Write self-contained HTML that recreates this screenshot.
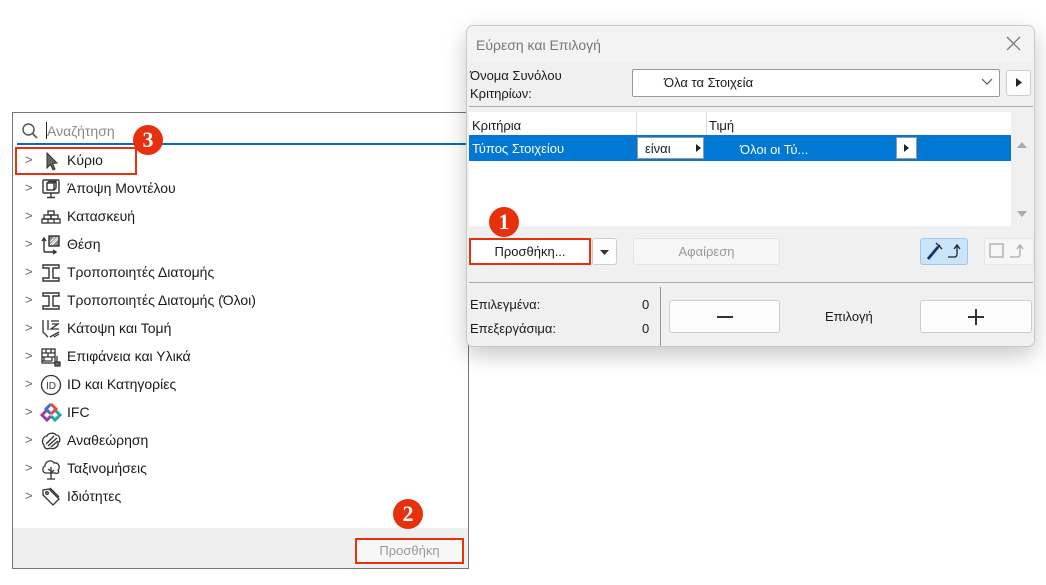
<!DOCTYPE html>
<html><head><meta charset="utf-8"><style>
*{box-sizing:border-box;margin:0;padding:0}
body{width:1046px;height:585px;background:#fff;position:relative;overflow:hidden;font-family:"Liberation Sans","DejaVu Sans",sans-serif;color:#1a1a1a}
.a{position:absolute}
.t{position:absolute;white-space:nowrap;font-size:13px}
.li{position:absolute;left:0;height:28px;width:440px;font-size:14px}
.li .ch{position:absolute;left:9px;top:5px;color:#666;font-size:13px}
.li .ic{position:absolute;left:24px;top:3px;width:22px;height:22px}
.li .tx{position:absolute;left:51px;top:5px}
.badge{position:absolute;width:30px;height:30px;border-radius:50%;background:#e8300c;color:#fff;font-family:"Liberation Serif",serif;font-weight:bold;font-size:22px;text-align:center;line-height:30px}
.btn{position:absolute;background:#fdfdfd;border:1px solid #ccc;border-radius:3px;font-size:13px;text-align:center}
</style></head><body>

<!-- left panel -->
<div class="a" style="left:12px;top:112px;width:457px;height:457px;border:1px solid #777;background:#fff">
  <svg class="a" style="left:8px;top:9px" width="18" height="18" viewBox="0 0 18 18"><circle cx="7.5" cy="7.5" r="5.5" fill="none" stroke="#555" stroke-width="1.5"/><path d="M11.5 11.5L16 16" stroke="#555" stroke-width="1.6"/></svg>
  <div class="a" style="left:33px;top:9px;width:1px;height:17px;background:#222"></div>
  <div class="t" style="left:34px;top:10px;font-size:14px;color:#888">Αναζήτηση</div>
  <div class="a" style="left:4px;top:30px;width:452px;height:2px;background:#0a66c2"></div>
  <div class="a" style="left:2px;top:34px;width:122px;height:28px;border:2px solid #e8300c"></div>
  <div style="position:absolute;left:3px;top:34px">
    <div class="li" style="top:0"><span class="ch">&gt;</span><svg class="ic" viewBox="0 0 22 22"><path d="M7 3L7 18L10.5 14.5L13 20L15 19L12.5 13.5L17 13Z" fill="#666" stroke="#333" stroke-width="1"/></svg><span class="tx">Κύριο</span></div>
    <div class="li" style="top:28px"><span class="ch">&gt;</span><svg class="ic" viewBox="0 0 22 22" fill="none" stroke="#333" stroke-width="1.4"><rect x="3" y="2" width="16" height="13" rx="1"/><rect x="7" y="5" width="7" height="7"/><path d="M7 5L9 3.5H16V10L14 12M14 5L16 3.5M11 15V19M7 19.5H15"/></svg><span class="tx">Άποψη Μοντέλου</span></div>
    <div class="li" style="top:56px"><span class="ch">&gt;</span><svg class="ic" viewBox="0 0 22 22" fill="none" stroke="#333" stroke-width="1.3"><rect x="8" y="5" width="6" height="4"/><rect x="4" y="9" width="7" height="4"/><rect x="11" y="9" width="7" height="4"/><rect x="2" y="13" width="18" height="4"/><path d="M8 13V17M14 13V17"/></svg><span class="tx">Κατασκευή</span></div>
    <div class="li" style="top:84px"><span class="ch">&gt;</span><svg class="ic" viewBox="0 0 22 22" fill="none" stroke="#333" stroke-width="1.4"><path d="M4 18V5M2 7L4 4L6 7M4 18H15M13 16L16 18L13 20"/><rect x="9" y="2" width="10" height="10" fill="#888"/><path d="M10 11L18 3M12 11L18 5M10 8L15 3" stroke="#fff" stroke-width="1"/></svg><span class="tx">Θέση</span></div>
    <div class="li" style="top:112px"><span class="ch">&gt;</span><svg class="ic" viewBox="0 0 22 22" fill="none" stroke="#333" stroke-width="1.4"><path d="M3 3H19V6H13V16H19V19H3V16H9V6H3Z"/></svg><span class="tx">Τροποποιητές Διατομής</span></div>
    <div class="li" style="top:140px"><span class="ch">&gt;</span><svg class="ic" viewBox="0 0 22 22" fill="none" stroke="#333" stroke-width="1.4"><path d="M3 3H19V6H13V16H19V19H3V16H9V6H3Z"/></svg><span class="tx">Τροποποιητές Διατομής (Όλοι)</span></div>
    <div class="li" style="top:168px"><span class="ch">&gt;</span><svg class="ic" viewBox="0 0 22 22" fill="none" stroke="#333" stroke-width="1.3"><path d="M3 2V14L8 19M8 2V12M11 3H19M12 6L18 6L11 11H19M10 19L19 14M14 19L19 16"/></svg><span class="tx">Κάτοψη και Τομή</span></div>
    <div class="li" style="top:196px"><span class="ch">&gt;</span><svg class="ic" viewBox="0 0 22 22" fill="none" stroke="#333" stroke-width="1.3"><rect x="2" y="3" width="13" height="14"/><path d="M2 7H15M2 11H15M2 15H12M6 3V7M11 3V7M8 7V11M4 11V15M12 11V15"/><path d="M17 10V16M15 16H20V20H15Z" fill="#666"/></svg><span class="tx">Επιφάνεια και Υλικά</span></div>
    <div class="li" style="top:224px"><span class="ch">&gt;</span><svg class="ic" viewBox="0 0 22 22"><circle cx="11" cy="11" r="9.5" fill="none" stroke="#333" stroke-width="1.3"/><text x="11" y="15" font-size="10" text-anchor="middle" fill="#333" font-family="Liberation Sans">ID</text></svg><span class="tx">ID και Κατηγορίες</span></div>
    <div class="li" style="top:252px"><span class="ch">&gt;</span><svg class="ic" viewBox="0 0 22 22" fill="none" stroke-width="3"><path d="M11 2L6 7L11 12" stroke="#3d6fd1"/><path d="M11 2L16 7L11 12" stroke="#e44a4a"/><path d="M6 9L2 13L7 18L11 14" stroke="#a03aa8"/><path d="M16 9L20 13L15 18L11 14" stroke="#20a89a"/></svg><span class="tx">IFC</span></div>
    <div class="li" style="top:280px"><span class="ch">&gt;</span><svg class="ic" viewBox="0 0 22 22" fill="none" stroke="#333" stroke-width="1.3"><path d="M4 15C1 12 3 6 7 6C8 3 14 2 16 5C20 5 21 11 18 13C19 17 13 20 10 18C7 20 4 18 4 15Z"/><path d="M6 14L14 6M8 16L17 8M11 17L18 11"/></svg><span class="tx">Αναθεώρηση</span></div>
    <div class="li" style="top:308px"><span class="ch">&gt;</span><svg class="ic" viewBox="0 0 22 22" fill="none" stroke="#333" stroke-width="1.3"><path d="M6 15C2 15 2 9 5 8C5 3 12 1 14 5C18 4 21 9 18 12C20 15 17 16 15 15Z"/><path d="M11 9V21M11 13L8 11M11 15L14 12M7 21H15"/></svg><span class="tx">Ταξινομήσεις</span></div>
    <div class="li" style="top:336px"><span class="ch">&gt;</span><svg class="ic" viewBox="0 0 22 22" fill="none" stroke="#333" stroke-width="1.3"><path d="M3 4L9 3L19 13L13 19L3 9Z"/><circle cx="7" cy="7" r="1.3"/><path d="M10 2L19 11"/></svg><span class="tx">Ιδιότητες</span></div>
  </div>
  <div class="a" style="left:0;top:415px;width:455px;height:40px;background:#efefef"></div>
  <div class="a" style="left:342px;top:425px;width:109px;height:26px;border:2px solid #e8300c;background:#f7f7f7;color:#999;font-size:13px;text-align:center;line-height:22px">Προσθήκη</div>
</div>
<div class="badge" style="left:133px;top:125px">3</div>
<div class="badge" style="left:393px;top:499px">2</div>

<!-- dialog -->
<div class="a" style="left:466px;top:25px;width:569px;height:322px;border:1px solid #c8c8c8;border-radius:7px;background:#f0f0f0;box-shadow:0 8px 22px rgba(0,0,0,0.22);overflow:hidden">
  <div class="a" style="left:0;top:0;width:569px;height:36px;background:#f3f3f3"></div>
  <div class="t" style="left:9px;top:11px;font-size:14px;color:#777">Εύρεση και Επιλογή</div>
  <svg class="a" style="left:539px;top:10px" width="15" height="15"><path d="M1 1L14 14M14 1L1 14" stroke="#777" stroke-width="1.3"/></svg>
  <div class="t" style="left:3px;top:42px">Όνομα Συνόλου</div>
  <div class="t" style="left:3px;top:60px">Κριτηρίων:</div>
  <div class="a" style="left:165px;top:43px;width:368px;height:28px;background:#fff;border:1px solid #999;border-radius:2px"></div>
  <div class="t" style="left:197px;top:49px">Όλα τα Στοιχεία</div>
  <svg class="a" style="left:514px;top:52px" width="12" height="8"><path d="M1 1L6 6L11 1" fill="none" stroke="#555" stroke-width="1.2"/></svg>
  <div class="btn" style="left:539px;top:44px;width:25px;height:26px"></div>
  <svg class="a" style="left:548px;top:51px" width="8" height="11"><path d="M1 1L7 5.5L1 10Z" fill="#222"/></svg>
  <div class="a" style="left:2px;top:80px;width:564px;height:1px;background:#aaa"></div>
  <!-- table -->
  <div class="a" style="left:2px;top:86px;width:542px;height:114px;background:#fff"></div>
  <div class="a" style="left:169px;top:86px;width:1px;height:23px;background:#ddd"></div>
  <div class="a" style="left:239px;top:86px;width:1px;height:23px;background:#ddd"></div>
  <div class="t" style="left:5px;top:92px">Κριτήρια</div>
  <div class="t" style="left:242px;top:92px">Τιμή</div>
  <div class="a" style="left:2px;top:109px;width:542px;height:26px;background:#0078d4"></div>
  <div class="t" style="left:5px;top:115px;color:#fff">Τύπος Στοιχείου</div>
  <div class="a" style="left:170px;top:111px;width:67px;height:22px;background:#fff;border:1px solid #999"></div>
  <div class="t" style="left:178px;top:115px">είναι</div>
  <svg class="a" style="left:228px;top:117px" width="7" height="10"><path d="M1 1L6 5L1 9Z" fill="#222"/></svg>
  <div class="t" style="left:273px;top:116px;color:#fff">Όλοι οι Τύ...</div>
  <div class="a" style="left:429px;top:111px;width:21px;height:22px;background:#fff;border:1px solid #999"></div>
  <svg class="a" style="left:436px;top:117px" width="7" height="10"><path d="M1 1L6 5L1 9Z" fill="#222"/></svg>
  <svg class="a" style="left:549px;top:114px" width="12" height="10"><path d="M1 8L6 2L11 8Z" fill="#aaa"/></svg>
  <svg class="a" style="left:549px;top:183px" width="12" height="10"><path d="M1 2L6 8L11 2Z" fill="#aaa"/></svg>
  <!-- buttons -->
  <div class="btn" style="left:2px;top:212px;width:122px;height:27px;background:#fff;border:2px solid #e8300c;border-radius:0;line-height:23px">Προσθήκη...</div>
  <div class="btn" style="left:125px;top:212px;width:25px;height:27px"></div>
  <svg class="a" style="left:132px;top:223px" width="11" height="7"><path d="M1 1L10 1L5.5 6Z" fill="#333"/></svg>
  <div class="btn" style="left:166px;top:212px;width:147px;height:27px;color:#999;line-height:25px;border-color:#e3e3e3;background:#f6f6f6">Αφαίρεση</div>
  <div class="a" style="left:453px;top:212px;width:48px;height:27px;background:#cce4f7;border:1px solid #99c9ef;border-radius:3px"></div>
  <svg class="a" style="left:457px;top:214px" width="42" height="22" fill="none"><path d="M4 19L14 7" stroke="#0a5ec4" stroke-width="3"/><path d="M4 19L14 7M12 3L18 9M13 8L16 5" stroke="#222" stroke-width="1.3"/><path d="M24 17H31Q33 17 33 13V6M30 9L33 5L36 9" stroke="#222" stroke-width="1.3"/></svg>
  <div class="a" style="left:517px;top:212px;width:50px;height:27px;background:#f6f6f6;border:1px solid #e5e5e5;border-radius:3px"></div>
  <svg class="a" style="left:519px;top:214px" width="48" height="22" fill="none" stroke="#aaa" stroke-width="1.3"><rect x="4" y="4" width="13" height="13"/><path d="M24 17H32Q34 17 34 13V6M31 9L34 5L37 9"/></svg>
  <div class="a" style="left:2px;top:256px;width:564px;height:1px;background:#aaa"></div>
  <div class="a" style="left:193px;top:261px;width:1px;height:60px;background:#999"></div>
  <div class="t" style="left:3px;top:271px">Επιλεγμένα:</div>
  <div class="t" style="left:3px;top:295px">Επεξεργάσιμα:</div>
  <div class="t" style="left:175px;top:271px">0</div>
  <div class="t" style="left:175px;top:295px">0</div>
  <div class="btn" style="left:202px;top:274px;width:111px;height:33px"></div>
  <div class="a" style="left:250px;top:290px;width:16px;height:1.5px;background:#333"></div>
  <div class="t" style="left:358px;top:283px">Επιλογή</div>
  <div class="btn" style="left:453px;top:274px;width:112px;height:33px"></div>
  <div class="a" style="left:501px;top:290px;width:16px;height:1.5px;background:#333"></div>
  <div class="a" style="left:508px;top:283px;width:1.5px;height:16px;background:#333"></div>
</div>
<div class="badge" style="left:489px;top:207px">1</div>
</body></html>
